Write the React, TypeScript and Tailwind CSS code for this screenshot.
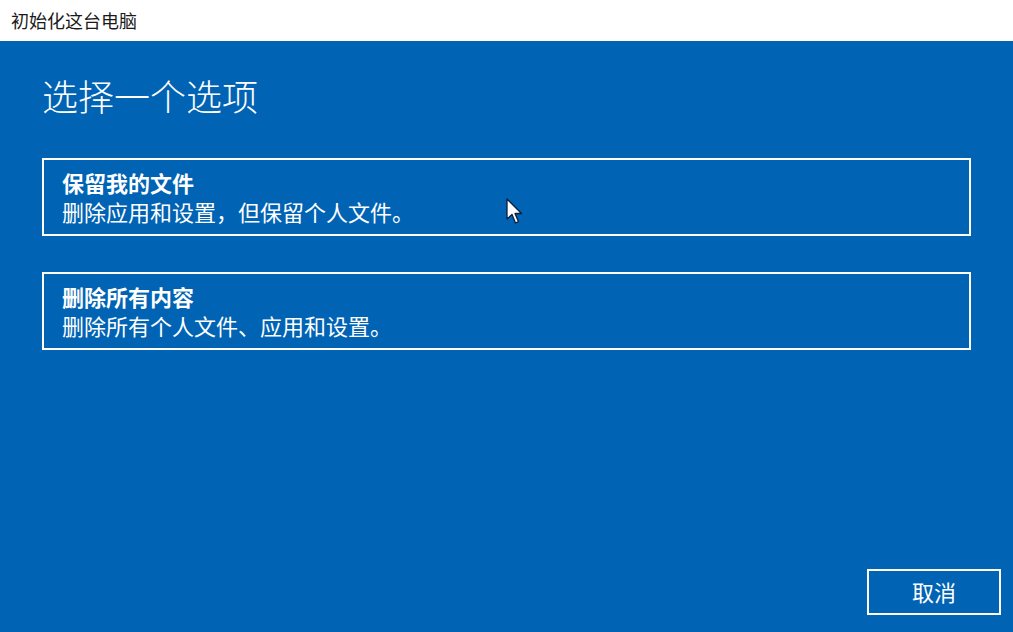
const font = { fontFamily: '"Microsoft YaHei", "Noto Sans CJK SC", sans-serif' };

type Option = { title: string; desc: string };

const options: Option[] = [
  { title: "保留我的文件", desc: "删除应用和设置，但保留个人文件。" },
  { title: "删除所有内容", desc: "删除所有个人文件、应用和设置。" },
];

function OptionCard({ title, desc }: Option) {
  return (
    <button className="flex h-[78px] w-[929px] flex-col items-start justify-center border-2 border-white px-[18px] text-left text-white">
      <span className="text-[22px] font-bold leading-[29px]">{title}</span>
      <span className="text-[22px] leading-[29px]">{desc}</span>
    </button>
  );
}

function Cursor() {
  return (
    <svg className="absolute left-[506px] top-[198px]" width="18" height="28" viewBox="0 0 18 28">
      <path
        d="M1 1 L1 21 L6 16.5 L9.5 25 L12.5 23.7 L9 15.5 L15.5 15.5 Z"
        fill="#fff"
        stroke="#0b1f3a"
        strokeWidth="1.3"
        strokeLinejoin="round"
      />
    </svg>
  );
}

export default function App() {
  return (
    <div className="relative flex h-[632px] w-[1013px] flex-col overflow-hidden" style={font}>
      <div className="flex h-[41px] items-center bg-white px-[11px] text-[18px] text-[#1a1a1a]">
        初始化这台电脑
      </div>
      <div className="flex flex-1 flex-col bg-[#0063b4] pl-[42px] pr-[12px]">
        <h1 className="mt-[32px] text-[36px] font-light leading-[44px] text-white">选择一个选项</h1>
        <div className="mt-[41px] flex flex-col gap-[36px]">
          {options.map((o) => (
            <OptionCard key={o.title} {...o} />
          ))}
        </div>
        <div className="mt-auto mb-[17px] flex justify-end">
          <button className="h-[46px] w-[134px] border-2 border-white pb-[2px] text-[22px] text-white">取消</button>
        </div>
      </div>
      <Cursor />
    </div>
  );
}
